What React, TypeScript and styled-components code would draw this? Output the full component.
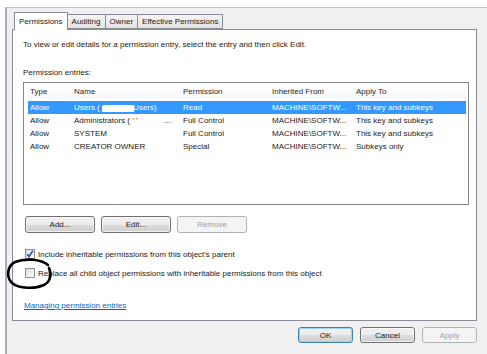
import React from 'react'
import styled, { createGlobalStyle } from 'styled-components'

const GlobalStyle = createGlobalStyle`
  html, body {
    margin: 0;
    padding: 0;
    background: #ffffff;
  }
  body {
    font-family: "Liberation Sans", Arial, sans-serif;
    font-size: 8px;
    color: #1a1a1a;
  }
  * {
    box-sizing: border-box;
  }
`

const entries = [
  { type: 'Allow', name: 'Users (\u00a0\u00a0\u00a0\u00a0\u00a0\u00a0\u00a0\u00a0\u00a0\u00a0\u00a0\u00a0\u00a0\u00a0\\Users)', permission: 'Read', inherited: 'MACHINE\\SOFTW...', apply: 'This key and subkeys', selected: true },
  { type: 'Allow', name: "Administrators ( ' '\u00a0\u00a0\u00a0\u00a0\u00a0\u00a0\u00a0\u00a0\u00a0\u00a0\u00a0\u00a0...", permission: 'Full Control', inherited: 'MACHINE\\SOFTW...', apply: 'This key and subkeys' },
  { type: 'Allow', name: 'SYSTEM', permission: 'Full Control', inherited: 'MACHINE\\SOFTW...', apply: 'This key and subkeys' },
  { type: 'Allow', name: 'CREATOR OWNER', permission: 'Special', inherited: 'MACHINE\\SOFTW...', apply: 'Subkeys only' },
]

const tabs = ['Permissions', 'Auditing', 'Owner', 'Effective Permissions']

const App: React.FC = () => {
  return (
    <>
      <GlobalStyle />
      <Frame>
        <TabRow>
          {tabs.map((t, i) => (
            <Tab key={t} active={i === 0}>{t}</Tab>
          ))}
        </TabRow>
        <Panel>
          <Line>To view or edit details for a permission entry, select the entry and then click Edit.</Line>
          <Line style={{ marginTop: 17 }}>Permission entries:</Line>
          <ListView>
            <HeaderRow>
              <Cell first>Type</Cell>
              <Cell>Name</Cell>
              <Cell>Permission</Cell>
              <Cell>Inherited From</Cell>
              <Cell>Apply To</Cell>
            </HeaderRow>
            {entries.map((e) => (
              <Row key={e.name} selected={e.selected}>
                <Cell first>{e.type}</Cell>
                <Cell>
                  {e.name}
                  {e.selected && <Smudge />}
                </Cell>
                <Cell>{e.permission}</Cell>
                <Cell>{e.inherited}</Cell>
                <Cell>{e.apply}</Cell>
              </Row>
            ))}
          </ListView>
          <ButtonRow>
            <Button>Add...</Button>
            <Button>Edit...</Button>
            <Button disabled>Remove</Button>
          </ButtonRow>
          <CheckRow style={{ marginTop: 15 }}>
            <Box>
              <svg width="8" height="8" viewBox="0 0 8 8">
                <path d="M1.2 4.2 L3 6.6 L6.9 0.8" fill="none" stroke="#2f4fa8" strokeWidth="1.6" />
              </svg>
            </Box>
            Include inheritable permissions from this object's parent
          </CheckRow>
          <CheckRow style={{ marginTop: 7 }}>
            <Box />
            Replace all child object permissions with inheritable permissions from this object
            <Circle width="50" height="34" viewBox="0 0 50 34">
              <path
                d="M43 8 C36 2 20 1 10 5 C2 9 1 20 7 26 C14 32 30 32 39 28 C45 25 47 18 44 11"
                fill="none"
                stroke="#000"
                strokeWidth="2.6"
                strokeLinecap="round"
              />
            </Circle>
          </CheckRow>
          <HelpLink href="#">Managing permission entries</HelpLink>
        </Panel>
        <Footer>
          <Button wide primary>OK</Button>
          <Button wide>Cancel</Button>
          <Button wide disabled>Apply</Button>
        </Footer>
      </Frame>
    </>
  )
}

const Frame = styled.div`
  margin: 7px 0 0 5px;
  width: 482px;
  height: 347px;
  border-top: 1px solid #c4c4c4;
  border-left: 2px solid #a3adbd;
  background: #f0f0f0;
  padding: 4px 10px 0 5px;
  display: flex;
  flex-direction: column;
`

const TabRow = styled.div`
  display: flex;
  align-items: flex-end;
  height: 17px;
  padding-left: 2px;
  position: relative;
  z-index: 1;
`

const Tab = styled.div<{ active?: boolean }>`
  height: ${(p) => (p.active ? '18px' : '15px')};
  margin-bottom: ${(p) => (p.active ? '-1px' : '0')};
  padding: 0 4px;
  margin-left: -1px;
  display: flex;
  align-items: center;
  border: 1px solid #898c95;
  border-bottom: ${(p) => (p.active ? 'none' : '1px solid #898c95')};
  background: ${(p) => (p.active ? '#ffffff' : 'linear-gradient(#f4f4f4, #e4e4e4)')};
  color: #1a1a1a;
  white-space: nowrap;
  &:first-child {
    margin-left: 0;
  }
`

const Panel = styled.div`
  flex: 0 0 292px;
  border: 1px solid #898c95;
  background: #ffffff;
  padding: 9px 7px 0 10px;
  display: flex;
  flex-direction: column;
`

const Line = styled.div`
  line-height: 11px;
  height: 11px;
  white-space: nowrap;
`

const ListView = styled.div`
  margin-top: 4px;
  width: 446px;
  height: 123px;
  border: 1px solid #828790;
  padding: 0 2px 0 4px;
`

const grid = `
  display: grid;
  grid-template-columns: 41px 109px 89px 84px 1fr;
  align-items: center;
  white-space: nowrap;
`

const HeaderRow = styled.div`
  ${grid}
  height: 16px;
  margin-bottom: 2px;
  color: #2b2b2b;
  background: linear-gradient(#ffffff, #f7f8fa);
`

const Row = styled.div<{ selected?: boolean }>`
  ${grid}
  height: 13px;
  background: ${(p) => (p.selected ? '#3399ff' : 'transparent')};
  color: ${(p) => (p.selected ? '#ffffff' : '#1a1a1a')};
`

const Cell = styled.div<{ first?: boolean }>`
  padding-left: ${(p) => (p.first ? '2px' : '5px')};
  overflow: hidden;
  position: relative;
`

const Smudge = styled.span`
  position: absolute;
  left: 33px;
  top: 2px;
  width: 32px;
  height: 8px;
  background: #ffffff;
  border-radius: 2px;
`

const ButtonRow = styled.div`
  display: flex;
  gap: 6px;
  margin-top: 11px;
  padding-left: 2px;
`

const Button = styled.button<{ wide?: boolean; primary?: boolean }>`
  width: ${(p) => (p.wide ? '55px' : '70px')};
  height: ${(p) => (p.wide ? '16px' : '17px')};
  padding: 0;
  font-family: "Liberation Sans", Arial, sans-serif;
  font-size: 8px;
  color: #1a1a1a;
  border: 1px solid ${(p) => (p.primary ? '#3c7fb1' : '#707070')};
  border-radius: 3px;
  background: linear-gradient(#f2f2f2 0%, #ebebeb 50%, #dddddd 51%, #cfcfcf 100%);
  box-shadow: inset 0 0 0 1px ${(p) => (p.primary ? '#9fd4f5' : 'rgba(255,255,255,0.7)')};
  &:disabled {
    color: #a0a0a0;
    border-color: #adb2b5;
    background: #f4f4f4;
    box-shadow: none;
  }
`

const CheckRow = styled.div`
  position: relative;
  display: flex;
  align-items: center;
  gap: 3px;
  height: 12px;
  padding-left: 2px;
  white-space: nowrap;
`

const Box = styled.div`
  width: 10px;
  height: 10px;
  border: 1px solid #8e8f8f;
  background: linear-gradient(135deg, #dcdcdc, #ffffff);
  display: flex;
  align-items: center;
  justify-content: center;
`

const Circle = styled.svg`
  position: absolute;
  left: -18px;
  top: -10px;
  pointer-events: none;
`

const HelpLink = styled.a`
  margin-top: 21px;
  padding-left: 1px;
  line-height: 11px;
  color: #0066cc;
  text-decoration: underline;
  align-self: flex-start;
`

const Footer = styled.div`
  display: flex;
  justify-content: flex-end;
  gap: 7px;
  padding-top: 6px;
`

export default App
